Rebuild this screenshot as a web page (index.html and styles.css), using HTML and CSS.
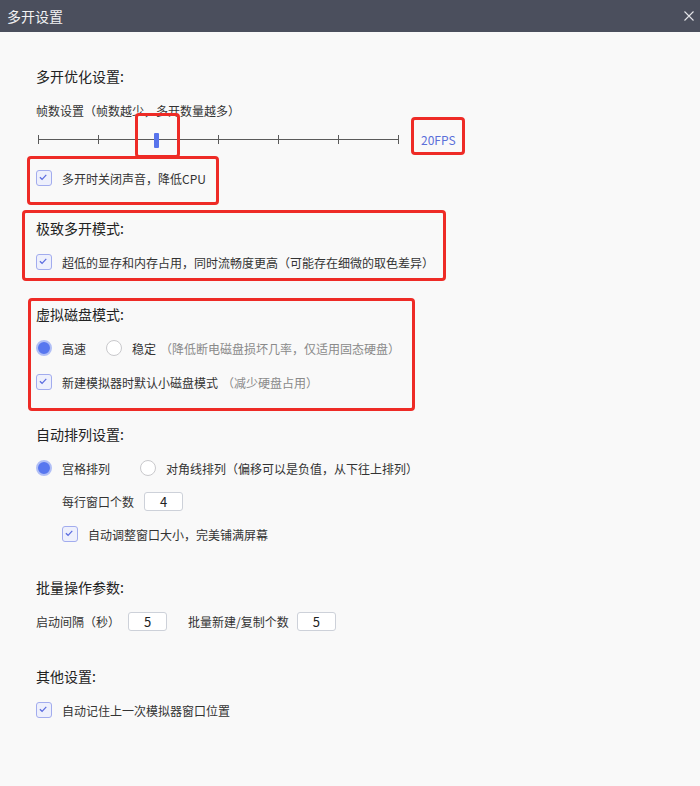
FILE: index.html
```html
<!DOCTYPE html>
<html lang="zh-CN">
<head>
    <meta charset="UTF-8">
    <meta name="viewport" content="width=device-width, initial-scale=1.0">
    <title>多开设置</title>
    <link rel="stylesheet" href="styles.css">
</head>
<body>
    <div class="dialog">
        <div class="title-bar">
            <span class="title">多开设置</span>
            <svg class="close" width="10" height="10" viewBox="0 0 10 10">
                <path d="M0.5 0.5L9.5 9.5M9.5 0.5L0.5 9.5" stroke="#e4e5e8" stroke-width="1.1" fill="none"/>
            </svg>
        </div>

        <div class="content">
            <!-- 多开优化 -->
            <section class="group">
                <div class="row heading">多开优化设置:</div>
                <div class="row">帧数设置（帧数越少，多开数量越多）</div>
                <div class="slider-row">
                    <div class="slider">
                        <span class="tick"></span>
                        <span class="tick"></span>
                        <span class="tick"></span>
                        <span class="tick"></span>
                        <span class="tick"></span>
                        <span class="tick"></span>
                        <span class="tick"></span>
                        <span class="thumb"></span>
                    </div>
                    <span class="fps">20FPS</span>
                </div>
                <div class="row option mute-row">
                    <span class="checkbox"><svg viewBox="0 0 16 16"><path d="M4.3 8.1l2.5 2.4 4.8-5" /></svg></span>
                    <span>多开时关闭声音，降低CPU</span>
                </div>
            </section>

            <!-- 极致多开 -->
            <section class="group group-extreme">
                <div class="row heading">极致多开模式:</div>
                <div class="row option">
                    <span class="checkbox"><svg viewBox="0 0 16 16"><path d="M4.3 8.1l2.5 2.4 4.8-5" /></svg></span>
                    <span>超低的显存和内存占用，同时流畅度更高（可能存在细微的取色差异）</span>
                </div>
            </section>

            <!-- 虚拟磁盘 -->
            <section class="group">
                <div class="row heading">虚拟磁盘模式:</div>
                <div class="row option">
                    <span class="radio checked"></span>
                    <span class="radio-text first-short">高速</span>
                    <span class="radio"></span>
                    <span>稳定</span>
                    <span class="note">（降低断电磁盘损坏几率，仅适用固态硬盘）</span>
                </div>
                <div class="row option">
                    <span class="checkbox"><svg viewBox="0 0 16 16"><path d="M4.3 8.1l2.5 2.4 4.8-5" /></svg></span>
                    <span>新建模拟器时默认小磁盘模式</span>
                    <span class="note">（减少硬盘占用）</span>
                </div>
            </section>

            <!-- 自动排列 -->
            <section class="group">
                <div class="row heading">自动排列设置:</div>
                <div class="row option">
                    <span class="radio checked"></span>
                    <span class="radio-text first-long">宫格排列</span>
                    <span class="radio"></span>
                    <span>对角线排列（偏移可以是负值，从下往上排列）</span>
                </div>
                <div class="row sub input-row">
                    <span>每行窗口个数</span>
                    <span class="field">4</span>
                </div>
                <div class="row option sub">
                    <span class="checkbox"><svg viewBox="0 0 16 16"><path d="M4.3 8.1l2.5 2.4 4.8-5" /></svg></span>
                    <span>自动调整窗口大小，完美铺满屏幕</span>
                </div>
            </section>

            <!-- 批量操作 -->
            <section class="group group-batch">
                <div class="row heading">批量操作参数:</div>
                <div class="row">
                    <span>启动间隔（秒）</span>
                    <span class="field">5</span>
                    <span class="batch-label">批量新建/复制个数</span>
                    <span class="field">5</span>
                </div>
            </section>

            <!-- 其他 -->
            <section class="group group-other">
                <div class="row heading">其他设置:</div>
                <div class="row option">
                    <span class="checkbox"><svg viewBox="0 0 16 16"><path d="M4.3 8.1l2.5 2.4 4.8-5" /></svg></span>
                    <span>自动记住上一次模拟器窗口位置</span>
                </div>
            </section>
        </div>

        <!-- 红框标注 -->
        <div class="mark mark-thumb"></div>
        <div class="mark mark-fps"></div>
        <div class="mark mark-mute"></div>
        <div class="mark mark-extreme"></div>
        <div class="mark mark-disk"></div>
    </div>
</body>
</html>
```

FILE: styles.css
```css
body {
    margin: 0;
    font-family: "Noto Sans CJK SC", "Microsoft YaHei", sans-serif;
    background-color: #f9f9f9;
    color: #333;
}
.dialog {
    position: relative;
    width: 700px;
    height: 786px;
    background-color: #f9f9f9;
}
.title-bar {
    height: 32px;
    background-color: #4b4f5d;
    display: flex;
    align-items: center;
    justify-content: space-between;
    padding: 0 6px 0 7px;
}
.title {
    font-size: 14px;
    color: #f2f2f4;
}
.close {
    display: block;
    margin-bottom: 1px;
}
.content {
    padding: 27px 0 0 36px;
}
.group {
    margin-top: 18px;
}
.group:first-child {
    margin-top: 0;
}
.group-extreme {
    margin-top: 16px;
}
.group-batch {
    margin-top: 19px;
}
.group-other {
    margin-top: 21px;
}
.row {
    height: 34px;
    display: flex;
    align-items: center;
    font-size: 12px;
    white-space: nowrap;
}
.heading {
    font-size: 14px;
    color: #222;
}
.sub {
    padding-left: 26px;
}
.input-row {
    height: 32px;
}

/* 滑块 */
.slider-row {
    height: 25px;
    display: flex;
    align-items: center;
}
.slider {
    position: relative;
    width: 361px;
    height: 9px;
    margin-left: 2px;
    display: flex;
    justify-content: space-between;
    background: linear-gradient(#5a5a5a, #5a5a5a) 0 4px / 100% 1px no-repeat;
}
.tick {
    width: 1px;
    height: 9px;
    background-color: #5a5a5a;
}
.thumb {
    position: absolute;
    left: 116px;
    top: -2px;
    width: 5px;
    height: 15px;
    border-radius: 1px;
    background-color: #5874ec;
}
.fps {
    margin-left: 22px;
    font-size: 12px;
    color: #5b6fd9;
}
.mute-row {
    margin-top: 9px;
}

/* 选项 */
.checkbox {
    width: 16px;
    height: 16px;
    box-sizing: border-box;
    border: 1px solid #a2acee;
    border-radius: 3px;
    background-color: #eef0fc;
    margin-right: 10px;
    flex-shrink: 0;
}
.checkbox svg {
    display: block;
    width: 14px;
    height: 14px;
}
.checkbox path {
    fill: none;
    stroke: #5a6bdf;
    stroke-width: 1.4;
    transform: translate(-1px, -1px);
}
.radio {
    width: 16px;
    height: 16px;
    box-sizing: border-box;
    border: 1px solid #c9c9cc;
    border-radius: 50%;
    background-color: #fff;
    margin-right: 10px;
    flex-shrink: 0;
}
.radio.checked {
    border: 2px solid #b1bff6;
    background-color: #5877ef;
}
.first-short {
    margin-right: 20px;
}
.first-long {
    margin-right: 30px;
}
.note {
    margin-left: 4px;
    color: #8a8a8a;
}
.field {
    width: 39px;
    height: 19px;
    box-sizing: border-box;
    border: 1px solid #cdd1d9;
    border-radius: 3px;
    background-color: #fff;
    margin-left: 10px;
    display: flex;
    align-items: center;
    justify-content: center;
    font-size: 13px;
    color: #222;
}
.group-batch .field {
    margin-left: 8px;
}
.batch-label {
    margin-left: 21px;
}

/* 红框标注 */
.mark {
    position: absolute;
    box-sizing: border-box;
    border: 3px solid #ee2b26;
    border-radius: 4px;
}
.mark-thumb { left: 135px; top: 113px; width: 45px; height: 45px; }
.mark-fps { left: 411px; top: 117px; width: 54px; height: 38px; }
.mark-mute { left: 27px; top: 156px; width: 192px; height: 49px; }
.mark-extreme { left: 22px; top: 210px; width: 424px; height: 71px; }
.mark-disk { left: 28px; top: 298px; width: 387px; height: 113px; }
```
